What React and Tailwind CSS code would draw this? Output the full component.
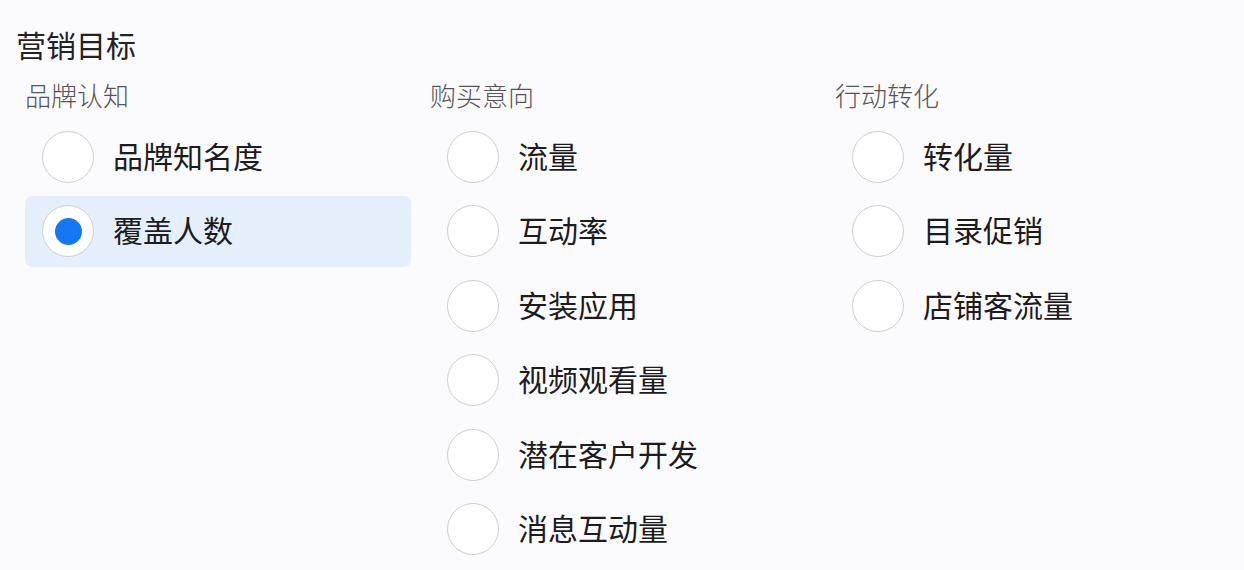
import React, { useState } from 'react'

const groups = [
  { title: '品牌认知', items: ['品牌知名度', '覆盖人数'] },
  { title: '购买意向', items: ['流量', '互动率', '安装应用', '视频观看量', '潜在客户开发', '消息互动量'] },
  { title: '行动转化', items: ['转化量', '目录促销', '店铺客流量'] },
]

const font = { fontFamily: '"Noto Sans CJK SC", "Noto Sans", sans-serif' }

function Radio({ checked }) {
  return (
    <span className="flex h-[52px] w-[52px] shrink-0 items-center justify-center rounded-full border border-[#cfcfd2] bg-white">
      {checked && <span className="h-[27px] w-[27px] rounded-full bg-[#1677f2]" />}
    </span>
  )
}

export default function App() {
  const [selected, setSelected] = useState('覆盖人数')

  return (
    <div className="h-[570px] w-[1244px] overflow-hidden bg-[#fbfafd] pt-[26px]" style={font}>
      <h2 className="pl-[16px] text-[30px] font-normal leading-[36px] text-[#222]">营销目标</h2>
      <div className="mt-[17px] flex pl-[25px]">
        {groups.map((g) => (
          <div key={g.title} className="w-[405px]">
            <div className="text-[26px] font-light leading-[32px] text-[#555]">{g.title}</div>
            <div className="mt-[10px] flex w-[386px] flex-col gap-[3px]">
              {g.items.map((item) => {
                const on = item === selected
                return (
                  <button
                    key={item}
                    onClick={() => setSelected(item)}
                    className={
                      'flex h-[71.5px] items-center gap-[19px] rounded-[7px] pl-[17px] text-left ' +
                      (on ? 'bg-[#e5effc]' : 'bg-transparent')
                    }
                  >
                    <Radio checked={on} />
                    <span className="pb-[4px] text-[30px] font-normal leading-[36px] text-[#1c1c1c]">{item}</span>
                  </button>
                )
              })}
            </div>
          </div>
        ))}
      </div>
    </div>
  )
}
